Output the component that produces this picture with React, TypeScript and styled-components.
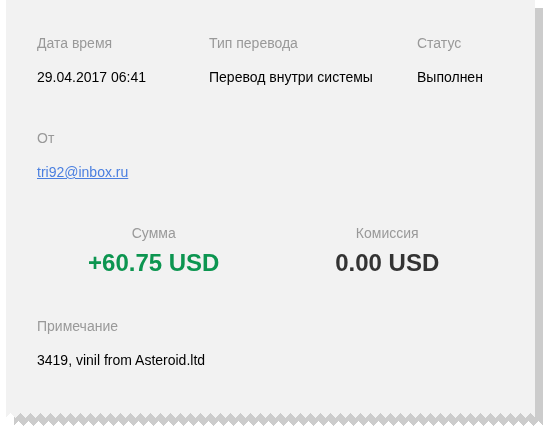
import React from 'react';
import styled, { createGlobalStyle } from 'styled-components';

const GlobalStyle = createGlobalStyle`
  html, body {
    margin: 0;
    padding: 0;
    background: #ffffff;
    font-family: "Liberation Sans", Arial, sans-serif;
  }
`;

const Page = styled.div`
  padding: 0 0 20px 6px;
  width: 529px;
`;

const Receipt = styled.div`
  display: flex;
  flex-direction: column;
  filter: drop-shadow(8px 8px 0 #cccccc);
`;

const Body = styled.div`
  background: #f2f2f2;
  padding: 33px 31px 43px 31px;
`;

const TornEdge = styled.div`
  height: 5px;
  background-image:
    linear-gradient(135deg, #f2f2f2 25%, transparent 25%),
    linear-gradient(225deg, #f2f2f2 25%, transparent 25%);
  background-size: 10px 10px;
  background-repeat: repeat-x;
`;

const Row = styled.div`
  display: grid;
  grid-template-columns: 172px 208px 1fr;
  margin-bottom: 41px;
`;

const Section = styled.div<{ $gap?: number }>`
  margin-bottom: ${p => p.$gap ?? 41}px;
`;

const Field = styled.div``;

const Label = styled.div`
  font-size: 14px;
  line-height: 20px;
  color: #999999;
  margin-bottom: 14px;
`;

const Value = styled.div`
  font-size: 14px;
  line-height: 20px;
  color: #000000;
  white-space: nowrap;
`;

const Link = styled.a`
  font-size: 14px;
  line-height: 20px;
  color: #4a7fe0;
  text-decoration: underline;
`;

const Totals = styled.div`
  display: grid;
  grid-template-columns: 1fr 1fr;
  margin-bottom: 39px;
  text-align: center;
`;

const TotalLabel = styled.div`
  font-size: 14px;
  line-height: 20px;
  color: #999999;
  margin-bottom: 6px;
`;

const Amount = styled.div<{ $positive?: boolean }>`
  font-size: 24px;
  line-height: 28px;
  font-weight: bold;
  color: ${p => (p.$positive ? '#0c9550' : '#333333')};
`;

export default function App() {
  return (
    <>
      <GlobalStyle />
      <Page>
        <Receipt>
          <Body>
            <Row>
              <Field>
                <Label>Дата время</Label>
                <Value>29.04.2017 06:41</Value>
              </Field>
              <Field>
                <Label>Тип перевода</Label>
                <Value>Перевод внутри системы</Value>
              </Field>
              <Field>
                <Label>Статус</Label>
                <Value>Выполнен</Value>
              </Field>
            </Row>

            <Section>
              <Label>От</Label>
              <Link href="#">tri92@inbox.ru</Link>
            </Section>

            <Totals>
              <Field>
                <TotalLabel>Сумма</TotalLabel>
                <Amount $positive>+60.75 USD</Amount>
              </Field>
              <Field>
                <TotalLabel>Комиссия</TotalLabel>
                <Amount>0.00 USD</Amount>
              </Field>
            </Totals>

            <Section $gap={0}>
              <Label>Примечание</Label>
              <Value>3419, vinil from Asteroid.ltd</Value>
            </Section>
          </Body>
          <TornEdge />
        </Receipt>
      </Page>
    </>
  );
}
